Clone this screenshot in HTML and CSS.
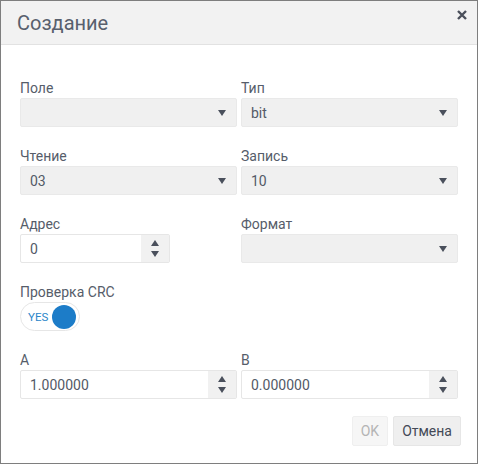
FILE: index.html
```html
<!DOCTYPE html>
<html>
<head>
<meta charset="utf-8">
<link rel="stylesheet" href="styles.css">
</head>
<body>
<div class="dialog">
  <div class="header">
    <span class="title">Создание</span>
    <span class="close"><svg width="10" height="10" viewBox="0 0 10 10"><path d="M1 1 L9 9 M9 1 L1 9" stroke="#4a4f5a" stroke-width="2.4" stroke-linecap="butt"/></svg></span>
  </div>
  <div class="body">
    <div class="grid">
      <div class="field">
        <div class="label">Поле</div>
        <div class="select"><span class="val"></span><span class="caret"></span></div>
      </div>
      <div class="field">
        <div class="label">Тип</div>
        <div class="select"><span class="val">bit</span><span class="caret"></span></div>
      </div>
      <div class="field">
        <div class="label">Чтение</div>
        <div class="select"><span class="val">03</span><span class="caret"></span></div>
      </div>
      <div class="field">
        <div class="label">Запись</div>
        <div class="select"><span class="val">10</span><span class="caret"></span></div>
      </div>
      <div class="field">
        <div class="label">Адрес</div>
        <div class="number short"><span class="val">0</span><span class="spin"><span class="up"></span><span class="down"></span></span></div>
      </div>
      <div class="field">
        <div class="label">Формат</div>
        <div class="select"><span class="val"></span><span class="caret"></span></div>
      </div>
      <div class="field">
        <div class="label">Проверка CRC</div>
        <div class="switch"><span class="yes">YES</span><span class="knob"></span></div>
      </div>
      <div class="field"></div>
      <div class="field">
        <div class="label">A</div>
        <div class="number"><span class="val">1.000000</span><span class="spin"><span class="up"></span><span class="down"></span></span></div>
      </div>
      <div class="field">
        <div class="label">B</div>
        <div class="number"><span class="val">0.000000</span><span class="spin"><span class="up"></span><span class="down"></span></span></div>
      </div>
    </div>
    <div class="buttons">
      <button class="btn disabled">OK</button>
      <button class="btn">Отмена</button>
    </div>
  </div>
</div>
</body>
</html>
```

FILE: styles.css
```css
html, body {
  margin: 0;
  padding: 0;
  background: #ffffff;
}
body {
  font-family: Roboto, "Liberation Sans", sans-serif;
  color: #565d6a;
}
.dialog {
  width: 478px;
  height: 464px;
  box-sizing: border-box;
  border: 1px solid #7e7e7e;
  background: #fff;
  display: flex;
  flex-direction: column;
}
.header {
  height: 43px;
  background: #f2f2f2;
  border-bottom: 1px solid #e2e2e2;
  position: relative;
  display: flex;
  align-items: center;
}
.title {
  font-size: 20px;
  color: #58606d;
  padding-left: 16px;
}
.close {
  position: absolute;
  right: 10px;
  top: 9px;
  line-height: 0;
}
.body {
  padding: 35px 19px 0 19px;
}
.grid {
  display: grid;
  grid-template-columns: 217px 217px;
  column-gap: 4px;
  row-gap: 21px;
}
.field {
  min-height: 47px;
}
.label {
  font-size: 14px;
  line-height: 17px;
  height: 17px;
  margin-bottom: 1px;
  color: #565d6a;
}
.select {
  height: 29px;
  box-sizing: border-box;
  border: 1px solid #e9e9e9;
  border-radius: 2px;
  background: #f0f0f0;
  display: flex;
  align-items: center;
  justify-content: space-between;
  padding: 0 10px 0 9px;
}
.val {
  font-size: 14px;
  color: #535a67;
}
.caret {
  width: 0;
  height: 0;
  border-left: 4.5px solid transparent;
  border-right: 4.5px solid transparent;
  border-top: 6px solid #4a505c;
}
.number {
  height: 29px;
  box-sizing: border-box;
  border: 1px solid #e6e6e6;
  border-radius: 2px;
  background: #fff;
  display: flex;
  align-items: center;
  justify-content: space-between;
  padding-left: 9px;
}
.number.short {
  width: 150px;
}
.spin {
  width: 28px;
  height: 27px;
  background: #f1f1f1;
  display: flex;
  flex-direction: column;
  align-items: center;
  justify-content: center;
  gap: 5px;
}
.up {
  width: 0;
  height: 0;
  border-left: 4.5px solid transparent;
  border-right: 4.5px solid transparent;
  border-bottom: 6px solid #4a505c;
}
.down {
  width: 0;
  height: 0;
  border-left: 4.5px solid transparent;
  border-right: 4.5px solid transparent;
  border-top: 6px solid #4a505c;
}
.switch {
  width: 60px;
  height: 29px;
  box-sizing: border-box;
  border: 1px solid #e6e6e6;
  border-radius: 15px;
  background: #fff;
  display: flex;
  align-items: center;
  padding-left: 7px;
  gap: 4px;
}
.yes {
  font-size: 11.5px;
  color: #2a86c9;
}
.knob {
  width: 24px;
  height: 24px;
  border-radius: 50%;
  background: #1c7cc8;
}
.buttons {
  display: flex;
  justify-content: flex-end;
  gap: 5px;
  margin-top: 17px;
  margin-right: -3px;
}
.btn {
  height: 30px;
  font-family: Roboto, "Liberation Sans", sans-serif;
  font-size: 14px;
  border: 1px solid #e6e6e6;
  border-radius: 2px;
  background: #efefef;
  color: #434956;
  padding: 0 8px;
}
.btn.disabled {
  background: #f6f6f6;
  color: #b4b4b4;
  border-color: #efefef;
}
```
